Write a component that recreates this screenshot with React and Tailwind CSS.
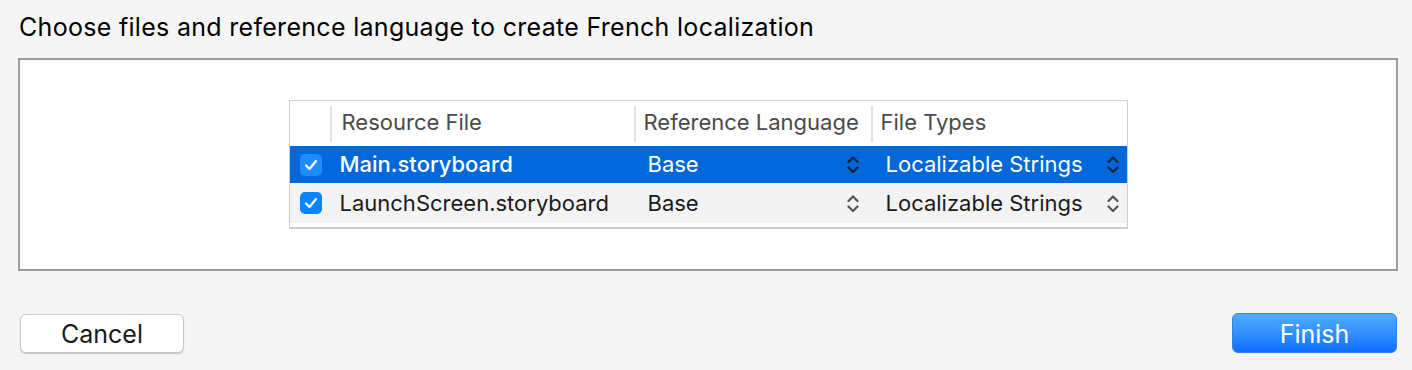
import React from "react";

function Chevrons({ color }) {
  return (
    <svg width="12" height="19" viewBox="0 0 12 19" fill="none" stroke={color} strokeWidth="2.2" strokeLinecap="round" strokeLinejoin="round">
      <path d="M1.5 7 L6 2.5 L10.5 7" />
      <path d="M1.5 12.5 L6 17 L10.5 12.5" />
    </svg>
  );
}

function Check({ bg }) {
  return (
    <div className={`w-[22px] h-[22px] rounded-[5px] flex items-center justify-center ${bg}`}>
      <svg width="14" height="12" viewBox="0 0 14 12" fill="none" stroke="white" strokeWidth="2.2" strokeLinecap="round" strokeLinejoin="round">
        <path d="M2 6.5 L5.5 10 L12 2" />
      </svg>
    </div>
  );
}

export default function App() {
  const font = { fontFamily: "Inter, 'Liberation Sans', sans-serif" };
  return (
    <div className="w-[1412px] h-[370px] bg-[#f5f5f5] flex flex-col" style={font}>
      <div className="pl-[19px] pt-[11px] h-[58px] text-[25px] text-black leading-[32px] tracking-[0.3px]">
        Choose files and reference language to create French localization
      </div>
      <div className="ml-[18px] w-[1380px] h-[213px] border-2 border-[#9b9b9b] bg-white flex items-center justify-center">
        <div className="w-[839px] h-[129px] border border-[#cfcfcf] border-b-2 bg-white flex flex-col">
          <div className="h-[45px] flex items-center text-[22px] text-[#4a4a4a]">
            <div className="w-[42px] h-full flex items-center justify-end">
              <div className="w-[2px] h-[36px] bg-[#e3e3e3]" />
            </div>
            <div className="w-[304px] h-full flex items-center justify-between">
              <span className="pl-[10px] pb-[2px]">Resource File</span>
              <div className="w-[2px] h-[36px] bg-[#e3e3e3]" />
            </div>
            <div className="w-[237px] h-full flex items-center justify-between">
              <span className="pl-[8px] pb-[2px]">Reference Language</span>
              <div className="w-[2px] h-[36px] bg-[#e3e3e3]" />
            </div>
            <div className="flex-1 h-full flex items-center">
              <span className="pl-[8px] pb-[2px]">File Types</span>
            </div>
          </div>
          <div className="h-[37px] bg-[#0068da] flex items-center text-[22px] text-white">
            <div className="w-[42px] flex justify-center pl-[1px]">
              <Check bg="bg-[#1e8cff]" />
            </div>
            <div className="w-[304px] pl-[8px] font-medium">Main.storyboard</div>
            <div className="w-[237px] flex items-center justify-between pl-[12px] pr-[14px]">
              <span>Base</span>
              <Chevrons color="#10233f" />
            </div>
            <div className="flex-1 flex items-center justify-between pl-[13px] pr-[8px]">
              <span>Localizable Strings</span>
              <Chevrons color="#10233f" />
            </div>
          </div>
          <div className="h-[40px] bg-[#f3f3f3] flex items-center text-[22px] text-[#1a1a1a]">
            <div className="w-[42px] flex justify-center pl-[1px]">
              <Check bg="bg-[#0a84ff]" />
            </div>
            <div className="w-[304px] pl-[8px]">LaunchScreen.storyboard</div>
            <div className="w-[237px] flex items-center justify-between pl-[12px] pr-[14px]">
              <span>Base</span>
              <Chevrons color="#555555" />
            </div>
            <div className="flex-1 flex items-center justify-between pl-[13px] pr-[8px]">
              <span>Localizable Strings</span>
              <Chevrons color="#555555" />
            </div>
          </div>
        </div>
      </div>
      <div className="flex justify-between items-center pl-[20px] pr-[15px] mt-[42px]">
        <button className="w-[164px] h-[39px] pt-[3px] rounded-[6px] bg-white border border-[#c8c8c8] shadow-[0_1px_1px_rgba(0,0,0,0.2)] text-[25px] text-[#1a1a1a] flex items-center justify-center">
          Cancel
        </button>
        <button className="w-[165px] h-[40px] pt-[3px] rounded-[6px] bg-gradient-to-b from-[#52adff] to-[#0a6fff] border border-[#2c84f0] text-[25px] text-white flex items-center justify-center">
          Finish
        </button>
      </div>
    </div>
  );
}
